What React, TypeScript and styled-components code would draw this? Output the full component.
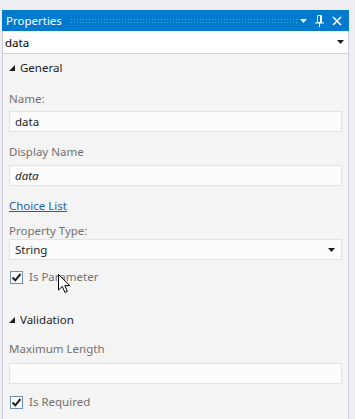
import React from "react";
import styled, { createGlobalStyle } from "styled-components";

const GlobalStyle = createGlobalStyle`
  html, body {
    margin: 0;
    padding: 0;
    background: #eeeef2;
  }
  body {
    font-family: "Noto Sans", "Open Sans", sans-serif;
    font-size: 11px;
  }
`;

const Frame = styled.div`
  position: relative;
  width: 355px;
  height: 419px;
  overflow: hidden;
  padding: 10px 0 0 2px;
  box-sizing: border-box;
`;

const Panel = styled.div`
  width: 347px;
  display: flex;
  flex-direction: column;
`;

const TitleBar = styled.div`
  height: 21px;
  background: #007acc;
  color: #ffffff;
  display: flex;
  align-items: center;
  padding: 0 7px 0 4px;
  box-sizing: border-box;
  font-size: 11.5px;
`;

const Title = styled.span`
  line-height: 21px;
  margin-right: 8px;
`;

const Grip = styled.div`
  flex: 1;
  height: 6px;
  margin-right: 3px;
  background-image: radial-gradient(circle, #4ea3dd 0.7px, transparent 0.9px);
  background-size: 3px 3px;
`;

const TitleButton = styled.span<{ $w: number; $gap: number }>`
  width: ${(p) => p.$w}px;
  height: 21px;
  display: flex;
  align-items: center;
  justify-content: center;
  margin-left: ${(p) => p.$gap}px;
`;

const ObjectSelect = styled.div`
  height: 22px;
  background: #ffffff;
  border-left: 1px solid #cccedb;
  border-right: 1px solid #cccedb;
  border-bottom: 1px solid #cccedb;
  display: flex;
  align-items: center;
  justify-content: space-between;
  padding: 0 4px 0 2px;
  color: #000000;
  font-size: 11.5px;
`;

const Body = styled.div`
  background: #f4f4f4;
  border-left: 1px solid #cccedb;
  border-right: 1px solid #cccedb;
  padding: 0 6px;
  height: 380px;
  display: flex;
  flex-direction: column;
`;

const SectionHeader = styled.div<{ $top: number }>`
  margin-top: ${(p) => p.$top}px;
  line-height: 16px;
  display: flex;
  align-items: center;
  gap: 5px;
  color: #1e1e1e;
  font-size: 11.5px;
`;

const Label = styled.div<{ $top: number }>`
  margin-top: ${(p) => p.$top}px;
  line-height: 16px;
  color: #717171;
  font-size: 11.5px;
`;

const TextBox = styled.div<{ $top: number; $italic?: boolean }>`
  margin-top: ${(p) => p.$top}px;
  height: 21px;
  box-sizing: border-box;
  background: #fcfcfc;
  border: 1px solid #e3e3e6;
  display: flex;
  align-items: center;
  justify-content: space-between;
  padding: 0 6px 0 5px;
  color: #1e1e1e;
  font-size: 11.5px;
  font-style: ${(p) => (p.$italic ? "italic" : "normal")};
`;

const LinkText = styled.a<{ $top: number }>`
  margin-top: ${(p) => p.$top}px;
  line-height: 16px;
  color: #1e5fa8;
  text-decoration: underline;
  font-size: 11.5px;
  align-self: flex-start;
`;

const CheckRow = styled.label<{ $top: number }>`
  margin-top: ${(p) => p.$top}px;
  line-height: 16px;
  display: flex;
  align-items: center;
  gap: 6px;
  padding-left: 1px;
  color: #717171;
  font-size: 11.5px;
`;

const CheckBox = styled.span`
  width: 13px;
  height: 13px;
  box-sizing: border-box;
  border: 1px solid #6d8fb8;
  background: #ffffff;
  display: flex;
  align-items: center;
  justify-content: center;
`;

const Cursor = styled.svg`
  position: absolute;
  left: 58px;
  top: 274px;
`;

const Caret = ({ color = "#1e1e1e" }: { color?: string }) => (
  <svg width="7" height="4" viewBox="0 0 7 4">
    <polygon points="0,0 7,0 3.5,4" fill={color} />
  </svg>
);

const Expander = () => (
  <svg width="6" height="6" viewBox="0 0 6 6">
    <polygon points="6,0 6,6 0,6" fill="#1e1e1e" />
  </svg>
);

const Check = ({ label, top }: { label: string; top: number }) => (
  <CheckRow $top={top}>
    <CheckBox>
      <svg width="11" height="11" viewBox="0 0 11 11">
        <path d="M1.5 5.5 L4.3 8.3 L9.5 2" fill="none" stroke="#1e1e1e" strokeWidth="2" />
      </svg>
    </CheckBox>
    {label}
  </CheckRow>
);

export default function App() {
  return (
    <>
      <GlobalStyle />
      <Frame>
        <Panel>
          <TitleBar>
            <Title>Properties</Title>
            <Grip />
            <TitleButton $w={7} $gap={0}>
              <Caret color="#ffffff" />
            </TitleButton>
            <TitleButton $w={9} $gap={8}>
              <svg width="9" height="12" viewBox="0 0 9 12">
                <path d="M2.5 0.5 H6.5 V7.5 H2.5 Z" fill="none" stroke="#ffffff" strokeWidth="1" />
                <path d="M5.5 0.5 V7.5" stroke="#ffffff" strokeWidth="1" />
                <path d="M0 8 H9" stroke="#ffffff" strokeWidth="1" />
                <path d="M4.5 8 V12" stroke="#ffffff" strokeWidth="1" />
              </svg>
            </TitleButton>
            <TitleButton $w={10} $gap={8}>
              <svg width="10" height="10" viewBox="0 0 10 10">
                <path d="M1 1 L9 9 M9 1 L1 9" stroke="#ffffff" strokeWidth="1.6" />
              </svg>
            </TitleButton>
          </TitleBar>
          <ObjectSelect>
            <span>data</span>
            <Caret />
          </ObjectSelect>
          <Body>
            <SectionHeader $top={6}>
              <Expander />
              General
            </SectionHeader>
            <Label $top={15}>Name:</Label>
            <TextBox $top={4}>data</TextBox>
            <Label $top={12}>Display Name</Label>
            <TextBox $top={5} $italic>
              data
            </TextBox>
            <LinkText $top={12}>Choice List</LinkText>
            <Label $top={9}>Property Type:</Label>
            <TextBox $top={0}>
              <span>String</span>
              <Caret />
            </TextBox>
            <Check label="Is Parameter" top={9} />
            <SectionHeader $top={27}>
              <Expander />
              Validation
            </SectionHeader>
            <Label $top={13}>Maximum Length</Label>
            <TextBox $top={6} />
            <Check label="Is Required" top={10} />
          </Body>
        </Panel>
        <Cursor width="13" height="20" viewBox="0 0 13 20">
          <path
            d="M0.5 0.5 L0.5 16 L4.3 12.4 L6.9 18.4 L9.3 17.4 L6.8 11.6 L11.8 11.6 Z"
            fill="#ffffff"
            stroke="#000000"
            strokeWidth="1"
            strokeLinejoin="round"
          />
        </Cursor>
      </Frame>
    </>
  );
}
